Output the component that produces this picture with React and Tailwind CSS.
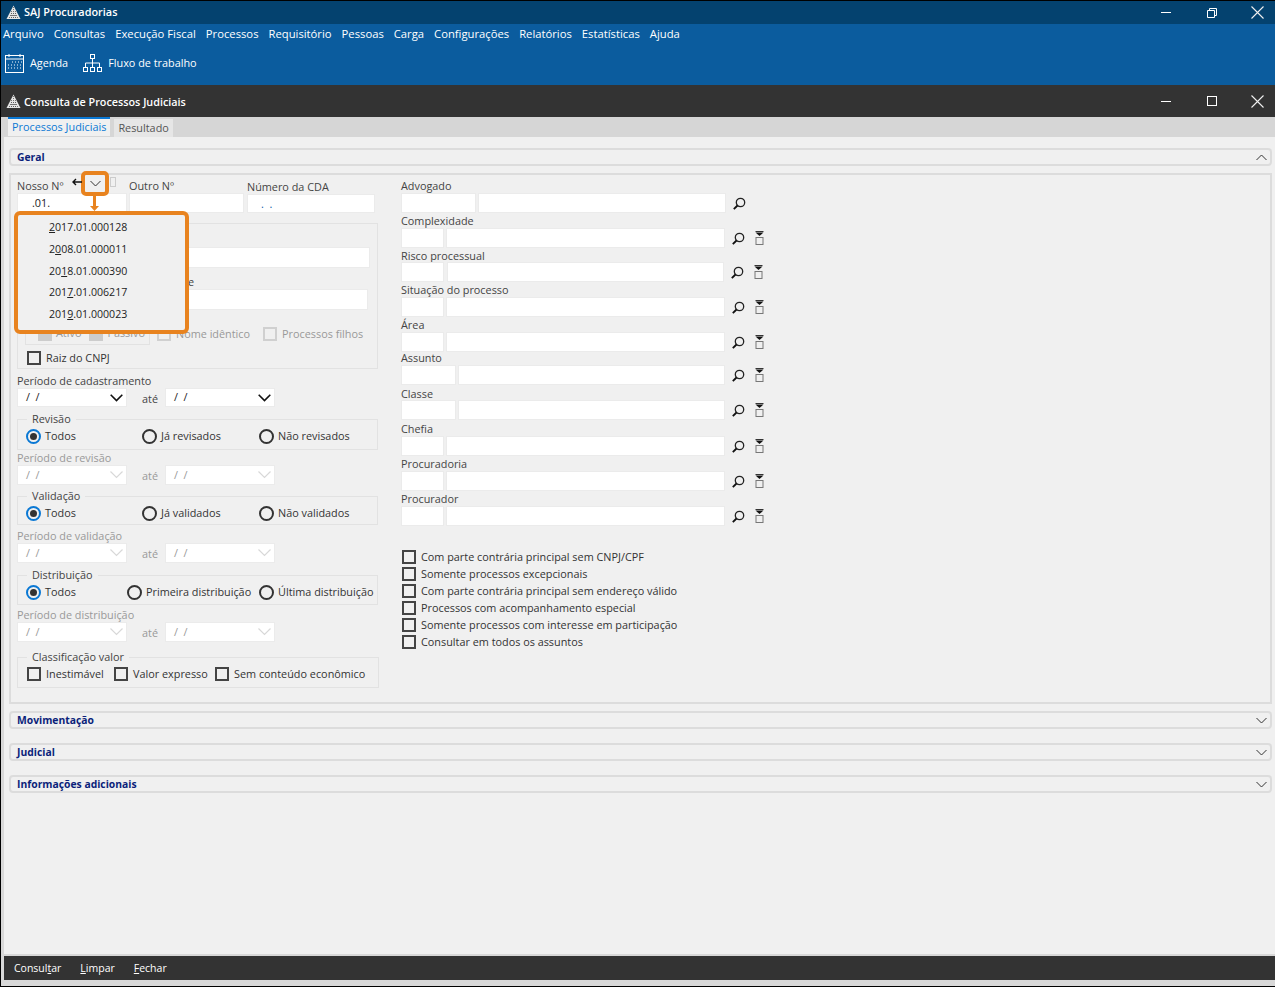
import React from 'react';

const font = { fontFamily: '"Open Sans", "Noto Sans", sans-serif' };

function Logo() {
  return (
    <svg width="15" height="15" viewBox="0 0 15 15" className="shrink-0">
      <polygon points="7.5,0.5 14.5,14 0.5,14" fill="#e4e4e4" />
      <path d="M5 8.5h5M4 10.5h7M3 12.5h9M7.5 2v12M5.5 6v8M9.5 6v8" stroke="#555" strokeWidth="0.8" strokeDasharray="1 1" />
    </svg>
  );
}

function WinMin() {
  return <div className="w-[10px] h-px bg-white" />;
}

function WinClose() {
  return (
    <svg width="13" height="13" viewBox="0 0 13 13">
      <path d="M0.5 0.5l12 12M12.5 0.5l-12 12" stroke="#f0f0f0" strokeWidth="1.1" />
    </svg>
  );
}

function WinControls({ restore }) {
  return (
    <div className="absolute top-0 right-0 h-full flex items-center">
      <div className="w-[10px] mr-[36px] flex justify-center"><WinMin /></div>
      <div className="w-[10px] mr-[34px] flex justify-center">
        {restore ? (
          <svg width="10" height="10" viewBox="0 0 10 10">
            <path d="M0.5 2.5h7v7h-7zM2.5 2.5v-2h7v7h-2" fill="none" stroke="#fff" />
          </svg>
        ) : (
          <svg width="10" height="10" viewBox="0 0 10 10">
            <rect x="0.5" y="0.5" width="9" height="9" fill="none" stroke="#fff" />
          </svg>
        )}
      </div>
      <div className="mr-[11px] flex"><WinClose /></div>
    </div>
  );
}

function CalendarIcon() {
  return (
    <svg width="19" height="20" viewBox="0 0 19 20" className="shrink-0">
      <rect x="0.5" y="2.5" width="18" height="17" fill="none" stroke="#fff" />
      <path d="M0.5 6h18" stroke="#fff" />
      <path d="M4 1v3M15 1v3" stroke="#fff" />
      <path d="M7 9h10M3 12h14M3 15h14" stroke="#fff" strokeDasharray="1 2" />
    </svg>
  );
}

function FlowIcon() {
  return (
    <svg width="20" height="19" viewBox="0 0 20 19" className="shrink-0">
      <rect x="7.5" y="0.5" width="4" height="4" fill="none" stroke="#fff" />
      <path d="M9.5 5v4M2.5 13V9h14v4M9.5 9v4" fill="none" stroke="#fff" />
      <rect x="0.5" y="13.5" width="4" height="4" fill="none" stroke="#fff" />
      <rect x="7.5" y="13.5" width="4" height="4" fill="none" stroke="#fff" />
      <rect x="14.5" y="13.5" width="4" height="4" fill="none" stroke="#fff" />
    </svg>
  );
}

function Chev({ up }) {
  return (
    <svg width="11" height="7" viewBox="0 0 11 7" className="shrink-0">
      <path d={up ? 'M0.5 6L5.5 1l5 5' : 'M0.5 1l5 5 5-5'} fill="none" stroke="#333" strokeWidth="1" />
    </svg>
  );
}

function SearchIcon() {
  return (
    <svg width="13" height="13" viewBox="0 0 13 13" className="shrink-0">
      <circle cx="7.5" cy="5.5" r="4.2" fill="none" stroke="#222" strokeWidth="1.3" />
      <path d="M4.5 8.5L0.8 12.2" stroke="#111" strokeWidth="1.8" />
    </svg>
  );
}

function ClearIcon() {
  return (
    <svg width="9" height="14" viewBox="0 0 9 14" className="shrink-0">
      <path d="M0.5 0.5h8" stroke="#333" />
      <polygon points="0.5,1.5 8.5,1.5 4.5,5" fill="#111" />
      <rect x="1" y="6.5" width="7" height="7" fill="none" stroke="#777" />
    </svg>
  );
}

function Input({ className = '', children }) {
  return (
    <div className={`bg-white border border-[#ebebeb] text-[10.85px] leading-[18px] whitespace-pre ${className}`}>{children}</div>
  );
}

function DateBox({ disabled, className = '' }) {
  return (
    <div className={`w-[110px] bg-white border border-[#ebebeb] flex items-center justify-between pl-[8px] pr-[2px] text-[10.85px] whitespace-pre ${disabled ? 'h-[20px] text-[#999]' : 'h-[19px] text-[#222]'} ${className}`}>
      <span>/  /</span>
      {disabled ? (
        <svg width="13" height="8" viewBox="0 0 13 8" className="shrink-0 mr-[1px]">
          <path d="M0.5 0.5l6 6 6-6" fill="none" stroke="#d8d8d8" strokeWidth="1.2" />
        </svg>
      ) : (
        <svg width="13" height="8" viewBox="0 0 13 8" className="shrink-0 mr-[1px]">
          <path d="M0.7 0.7l5.8 5.8 5.8-5.8" fill="none" stroke="#111" strokeWidth="1.6" />
        </svg>
      )}
    </div>
  );
}

function DateRow({ disabled }) {
  return (
    <div className="flex items-center">
      <DateBox disabled={disabled} />
      <span className={`w-[38px] pl-[15px] text-[10.85px] ${disabled ? 'pt-[1px] text-[#999]' : 'pt-[3px] text-[#444]'}`}>até</span>
      <DateBox disabled={disabled} />
    </div>
  );
}

function Label({ children, disabled }) {
  return <div className={`h-[14px] leading-[14px] text-[10.85px] whitespace-nowrap ${disabled ? 'text-[#999]' : 'text-[#444]'}`}>{children}</div>;
}

function Radio({ checked, children, className = '' }) {
  return (
    <div className={`flex items-center gap-[4px] text-[10.85px] text-[#333] whitespace-nowrap ${className}`}>
      {checked ? (
        <span className="w-[15px] h-[15px] rounded-full border-2 border-[#0a78d4] flex items-center justify-center shrink-0">
          <span className="w-[7px] h-[7px] rounded-full bg-[#333]" />
        </span>
      ) : (
        <span className="w-[15px] h-[15px] rounded-full border-2 border-[#333] shrink-0" />
      )}
      <span>{children}</span>
    </div>
  );
}

function Check({ children, disabled, className = '' }) {
  return (
    <div className={`flex items-center gap-[5px] text-[10.85px] whitespace-nowrap ${disabled ? 'text-[#999]' : 'text-[#333]'} ${className}`}>
      <span className={`w-[14px] h-[14px] border-2 shrink-0 ${disabled ? 'border-[#d0d0d0]' : 'border-[#444]'}`} />
      <span>{children}</span>
    </div>
  );
}

function Group({ legend, className = '', children }) {
  return (
    <div className={`relative border border-[#e2e2e2] w-[361px] flex items-center pl-[8px] ${className}`}>
      <span className="absolute -top-[8px] left-[9px] px-[5px] bg-[#f0f0f0] text-[10.85px] leading-[14px] text-[#444] whitespace-nowrap">{legend}</span>
      {children}
    </div>
  );
}

function SectionHeader({ title, up, className = '' }) {
  return (
    <div className={`h-[18px] border-2 border-[#dcdcdc] rounded-[4px] flex items-center justify-between pl-[6px] pr-[3px] ${className}`}>
      <span className="text-[10.35px] font-bold text-[#0b1f7a] pt-[2px]">{title}</span>
      <Chev up={up} />
    </div>
  );
}

function LookupRow({ label, left, gap, right, clear = true, className = '', inputMt = '' }) {
  return (
    <div className={`pb-px ${className}`}>
      <Label>{label}</Label>
      <div className={`flex items-center h-[20px] ${inputMt}`}>
        <Input className={`h-[20px] ${left}`} />
        <Input className={`h-[20px] ${gap} ${right}`} />
        <span className="ml-[7px] flex"><SearchIcon /></span>
        {clear && <span className="ml-[10px] flex"><ClearIcon /></span>}
      </div>
    </div>
  );
}

function U({ children }) {
  return <span className="underline">{children}</span>;
}

export default function App() {
  return (
    <div style={font} className="relative w-[1275px] h-[987px] bg-[#d8d8d8] border-t border-l border-black overflow-hidden flex flex-col">
      {/* App title bar */}
      <div className="relative h-[23px] shrink-0 bg-[#04426f] flex items-center pl-[5px] gap-[3px]">
        <Logo />
        <span className="text-[10.9px] font-semibold text-white">SAJ Procuradorias</span>
        <WinControls restore />
      </div>
      {/* Menu */}
      <div className="h-[61px] shrink-0 bg-[#0b5c9e] text-white">
        <div className="flex gap-[10px] pl-[2px] h-[19px] items-center text-[11.25px] leading-[19px]">
          {['Arquivo', 'Consultas', 'Execução Fiscal', 'Processos', 'Requisitório', 'Pessoas', 'Carga', 'Configurações', 'Relatórios', 'Estatísticas', 'Ajuda'].map((m) => (
            <span key={m}>{m}</span>
          ))}
        </div>
        <div className="flex items-center pl-[4px] mt-[10px] text-[10.85px]">
          <CalendarIcon />
          <span className="ml-[6px]">Agenda</span>
          <span className="ml-[15px] flex"><FlowIcon /></span>
          <span className="ml-[5px]">Fluxo de trabalho</span>
        </div>
      </div>
      {/* Window title */}
      <div className="relative h-[32px] shrink-0 bg-[#333] flex items-center pl-[5px] gap-[3px]">
        <Logo />
        <span className="text-[10.8px] font-semibold text-white pt-[2px]">Consulta de Processos Judiciais</span>
        <WinControls />
      </div>
      {/* Tabs */}
      <div className="h-[20px] shrink-0 bg-[#d6d6d6] flex items-start pl-[7px]">
        <div className="h-[19px] px-[4px] border-t-2 border-[#0a78d4] bg-[#f0f0f0] text-[10.85px] leading-[15px] text-[#0a78d4]">Processos Judiciais</div>
        <div className="h-[18px] mt-[2px] ml-[4px] px-[4px] bg-[#e6e6e6] text-[10.85px] leading-[17px] text-[#555]">Resultado</div>
      </div>
      {/* Content */}
      <div className="relative flex-1 ml-[3px] bg-[#f0f0f0] pl-[5px] pr-[3px] pt-[11px]">
        <SectionHeader title="Geral" up />
        {/* Panel */}
        <div className="mt-[7px] h-[531px] border-2 border-[#dcdcdc] flex pl-[6px]">
          {/* Left column */}
          <div className="w-[362px] shrink-0">
            <div className="flex pt-[4px]">
              <div className="w-[112px]">
                <Label>Nosso Nº</Label>
                <Input className="w-[110px] h-[20px] pl-[14px] text-[#222]">.01.</Input>
              </div>
              <div className="w-[118px]">
                <Label>Outro Nº</Label>
                <Input className="w-[115px] h-[20px]" />
              </div>
              <div>
                <div className="pt-px"><Label>Número da CDA</Label></div>
                <Input className="w-[128px] h-[19px] pl-[13px] text-[#0a5ca8]">.  .</Input>
              </div>
            </div>
            {/* Partes */}
            <div className="mt-[10px] h-[146px] w-[361px] border border-[#e2e2e2] pl-[7px]">
              <div className="h-[23px]" />
              <Input className="w-[345px] h-[21px]" />
              <div className="mt-[7px] pl-[163px]"><Label>e</Label></div>
              <Input className="w-[343px] h-[21px]" />
              <div className="flex items-center mt-[12px]">
                <div className="w-[125px] h-[23px] border border-[#e2e2e2] flex items-center pl-[12px] gap-[4px] text-[10.85px] text-[#999]">
                  <span className="w-[14px] h-[14px] bg-[#ccc]" /><span className="mr-[4px]">Ativo</span>
                  <span className="w-[14px] h-[14px] bg-[#ccc]" /><span>Passivo</span>
                </div>
                <Check disabled className="ml-[7px] mt-[2px]">Nome idêntico</Check>
                <Check disabled className="ml-[13px] mt-[2px]">Processos filhos</Check>
              </div>
              <Check className="ml-[2px] mt-[5px]">Raiz do CNPJ</Check>
            </div>
            <div className="mt-[5px]"><Label>Período de cadastramento</Label></div>
            <DateRow />
            <Group legend="Revisão" className="mt-[12px] h-[31px] pt-[3px]">
              <Radio checked className="w-[116px]">Todos</Radio>
              <Radio className="w-[117px]">Já revisados</Radio>
              <Radio>Não revisados</Radio>
            </Group>
            <div className="mt-px"><Label disabled>Período de revisão</Label></div>
            <DateRow disabled />
            <Group legend="Validação" className="mt-[11px] h-[29px] pt-[5px]">
              <Radio checked className="w-[116px]">Todos</Radio>
              <Radio className="w-[117px]">Já validados</Radio>
              <Radio>Não validados</Radio>
            </Group>
            <div className="mt-[4px]"><Label disabled>Período de validação</Label></div>
            <DateRow disabled />
            <Group legend="Distribuição" className="mt-[12px] h-[30px] pt-[4px]">
              <Radio checked className="w-[101px]">Todos</Radio>
              <Radio className="w-[132px]">Primeira distribuição</Radio>
              <Radio>Última distribuição</Radio>
            </Group>
            <div className="mt-[3px]"><Label disabled>Período de distribuição</Label></div>
            <DateRow disabled />
            <Group legend="Classificação valor" className="mt-[15px] h-[31px] w-[362px] pt-[3px]">
              <Check className="ml-px w-[87px]">Inestimável</Check>
              <Check className="w-[101px]">Valor expresso</Check>
              <Check>Sem conteúdo econômico</Check>
            </Group>
          </div>
          {/* Right column */}
          <div className="ml-[22px] pt-[4px]">
            <LookupRow label="Advogado" left="w-[75px]" gap="ml-[2px]" right="w-[248px]" clear={false} />
            <LookupRow label="Complexidade" left="w-[43px]" gap="ml-[2px]" right="w-[279px]" />
            <LookupRow label="Risco processual" inputMt="-mt-px" left="w-[43px]" gap="ml-[3px]" right="w-[277px]" />
            <LookupRow label="Situação do processo" left="w-[43px]" gap="ml-[2px]" right="w-[279px]" />
            <LookupRow label="Área" left="w-[43px]" gap="ml-[2px]" right="w-[279px]" />
            <LookupRow label="Assunto" className="-mt-[2px]" left="w-[55px]" gap="ml-[2px]" right="w-[267px]" />
            <LookupRow label="Classe" className="mt-px" inputMt="-mt-px" left="w-[55px]" gap="ml-[2px]" right="w-[267px]" />
            <LookupRow label="Chefia" className="mt-px" left="w-[43px]" gap="ml-[2px]" right="w-[279px]" />
            <LookupRow label="Procuradoria" left="w-[43px]" gap="ml-[2px]" right="w-[279px]" />
            <LookupRow label="Procurador" left="w-[43px]" gap="ml-[2px]" right="w-[279px]" />
            <div className="mt-[23px] flex flex-col gap-[3px] pl-px">
              {['Com parte contrária principal sem CNPJ/CPF', 'Somente processos excepcionais', 'Com parte contrária principal sem endereço válido', 'Processos com acompanhamento especial', 'Somente processos com interesse em participação', 'Consultar em todos os assuntos'].map((t) => (
                <Check key={t} className="h-[14px]">{t}</Check>
              ))}
            </div>
          </div>
        </div>
        <SectionHeader title="Movimentação" className="mt-[7px]" />
        <SectionHeader title="Judicial" className="mt-[14px]" />
        <SectionHeader title="Informações adicionais" className="mt-[14px]" />

        {/* Orange annotation over the form */}
        <div className="absolute left-[77px] top-[34px] w-[28px] h-[25px] border-[4px] border-[#e8831f] rounded-[5px] flex items-center justify-center bg-[#f0f0f0]">
          <Chev />
        </div>
        <svg width="16" height="10" viewBox="0 0 16 10" className="absolute left-[68px] top-[41px]">
          <path d="M1 4h9M4 1L1 4l3 3" fill="none" stroke="#111" strokeWidth="1.4" />
        </svg>
        <div className="absolute left-[106px] top-[40px] w-[6px] h-[10px] border border-[#ccc]" />
        <div className="absolute left-[89px] top-[59px] w-[3px] h-[11px] bg-[#e8831f]" />
        <div className="absolute left-[10px] top-[74px] w-[175px] h-[123px] border-[4px] border-[#e8831f] rounded-[6px] bg-[#f0f0f0] pl-[31px] pt-[2px] text-[10.6px] leading-[21.8px] text-[#222]">
          <div><U>2</U>017.01.000128</div>
          <div>2<U>0</U>08.01.000011</div>
          <div>20<U>1</U>8.01.000390</div>
          <div>201<U>7</U>.01.006217</div>
          <div>201<U>9</U>.01.000023</div>
        </div>
        <svg width="9" height="5" viewBox="0 0 9 5" className="absolute left-[86px] top-[69px]">
          <polygon points="0,0 9,0 4.5,5" fill="#e8831f" />
        </svg>
      </div>
      {/* Footer */}
      <div className="h-[24px] shrink-0 ml-[3px] mt-[2px] bg-[#333] flex items-center pl-[10px] gap-[19px] text-[10.5px] text-white pt-[2px]">
        <span>Consul<U>t</U>ar</span>
        <span><U>L</U>impar</span>
        <span><U>F</U>echar</span>
      </div>
      <div className="h-[6px] shrink-0 bg-[#d8d8d8]" />
      <div className="h-[1px] shrink-0 bg-black" />
    </div>
  );
}
